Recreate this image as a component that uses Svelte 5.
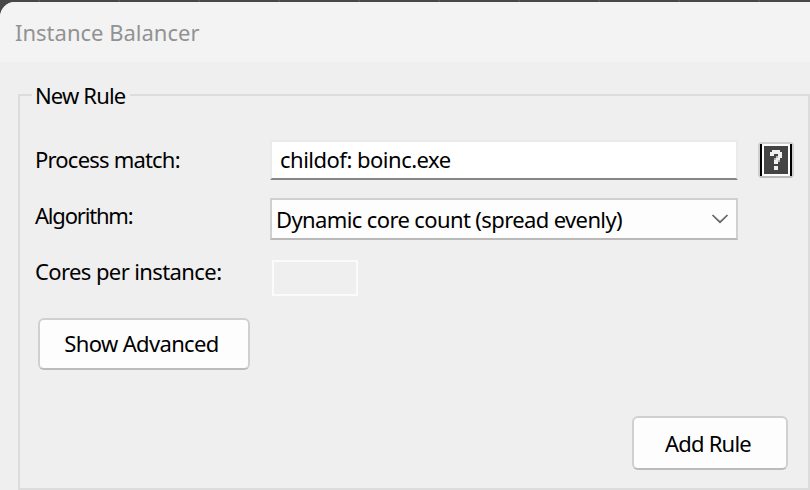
<script lang="ts">
  let processMatch = 'childof: boinc.exe';
  let algorithm = 'Dynamic core count (spread evenly)';
  const separators = [38, 118, 198, 278, 358, 438, 518, 598, 678, 758];
</script>

<div class="desktop">
  <svg class="strip" width="810" height="2">
    {#each separators as x}
      <rect {x} y="0" width="2" height="2" fill="#565454" />
    {/each}
  </svg>
  <div class="window">
    <header><span class="title">Instance Balancer</span></header>

    <main>
      <fieldset>
        <legend><span class="legend-text">New Rule</span></legend>

        <div class="row match-row">
          <label class="match-label" for="match">Process match:</label>
          <input id="match" type="text" bind:value={processMatch} spellcheck="false" />
          <button class="help" aria-label="Help">
            <svg width="32" height="32" viewBox="0 0 32 32" shape-rendering="crispEdges">
              <path d="M0 0H2V32H0zM30 0H32V32H30z" fill="#000" />
              <path d="M4 2H28V30H4z" fill="#444" />
              <path d="M10 8h2V6h8v2h2v6h-2v2h-2v4h-4v-4h2v-2h2v-4h-4v2h-4zM14 22h4v4h-4z" fill="#f0f0f3" />
              <path d="M16 12h2v2h-2zM14 14h2v2h-2zM18 16h2v2h-2z" fill="#b5b5b8" />
            </svg>
          </button>
        </div>

        <div class="row algorithm-row">
          <span class="label algorithm-label">Algorithm:</span>
          <div class="select">
            <span class="select-text">{algorithm}</span>
            <svg width="18" height="12" viewBox="0 0 18 12">
              <path d="M1.5 2L9 9.2L16.5 2" fill="none" stroke="#666" stroke-width="1.7" />
            </svg>
          </div>
        </div>

        <div class="row cores-row">
          <span class="label cores-label">Cores per instance:</span>
          <div class="cores"></div>
        </div>

        <button class="advanced"><span>Show Advanced</span></button>
        <button class="add"><span>Add Rule</span></button>
      </fieldset>
    </main>
  </div>
</div>

<style>
  .desktop {
    width: 810px;
    height: 490px;
    overflow: hidden;
    background: #494747;
    color: #000;
    font-family: 'Noto Sans', 'Open Sans', sans-serif;
    font-size: 22px;
    line-height: 30px;
    white-space: nowrap;
  }

  .strip {
    display: block;
  }

  .window {
    height: 488px;
    border-top-left-radius: 15px;
    background: #efefef;
    overflow: hidden;
  }

  header {
    height: 60px;
    box-sizing: border-box;
    padding: 15px 0 0 15px;
    background: #f3f3f3;
    color: #929292;
  }

  main {
    padding: 18px 0 0 18px;
  }

  fieldset {
    display: flex;
    flex-direction: column;
    width: 792px;
    height: 410px;
    box-sizing: border-box;
    margin: 0;
    padding: 30px 20px 0 14px;
    border: 2px solid #dcdcdc;
  }

  legend {
    width: 98px;
    height: 30px;
    box-sizing: border-box;
    margin-left: -2px;
    padding: 0 0 0 3px;
    letter-spacing: -0.85px;
  }

  .row {
    display: grid;
    grid-template-columns: 236px 468px 36px;
    align-items: start;
  }

  .match-row {
    height: 58px;
  }

  .algorithm-row {
    height: 62px;
  }

  .cores-row {
    height: 58px;
  }

  label,
  .label {
    padding-left: 1px;
  }

  label {
    padding-top: 4px;
    letter-spacing: -0.8px;
  }

  .algorithm-label {
    padding-top: 2px;
    letter-spacing: -1.2px;
  }

  .cores-label {
    margin-top: -4px;
    letter-spacing: -0.6px;
  }

  input {
    width: 468px;
    height: 40px;
    box-sizing: border-box;
    margin: 0;
    padding: 0 8px 2px;
    border: 2px solid #eaeaea;
    border-bottom-color: #858585;
    background: #fff;
    color: #000;
    font: inherit;
    letter-spacing: -0.5px;
    outline: none;
  }

  button {
    box-sizing: border-box;
    border: 2px solid #d0d0d0;
    border-bottom-color: #bbb;
    border-radius: 6px;
    background: #fdfdfd;
    color: #000;
    font: inherit;
  }

  .help {
    width: 36px;
    height: 36px;
    margin: 2px 0 0 20px;
    padding: 0;
    border-radius: 4px;
  }

  .help svg {
    display: block;
  }

  .select {
    display: flex;
    align-items: center;
    justify-content: space-between;
    width: 468px;
    height: 42px;
    box-sizing: border-box;
    padding: 0 7px 0 4px;
    border: 2px solid #d0d0d0;
    border-bottom-color: #b9b9b9;
    background: #fdfdfd;
  }

  .select-text {
    letter-spacing: -0.62px;
  }

  .cores {
    width: 86px;
    height: 36px;
    box-sizing: border-box;
    margin-left: 2px;
    border: 2px solid #fbfbfb;
  }

  .advanced {
    width: 212px;
    height: 52px;
    margin-left: 4px;
    padding: 0 5px 2px 0;
    letter-spacing: -0.65px;
  }

  .add {
    width: 156px;
    height: 54px;
    align-self: flex-end;
    margin-top: 46px;
    padding: 0 4px 0 0;
    letter-spacing: -0.8px;
  }
</style>
